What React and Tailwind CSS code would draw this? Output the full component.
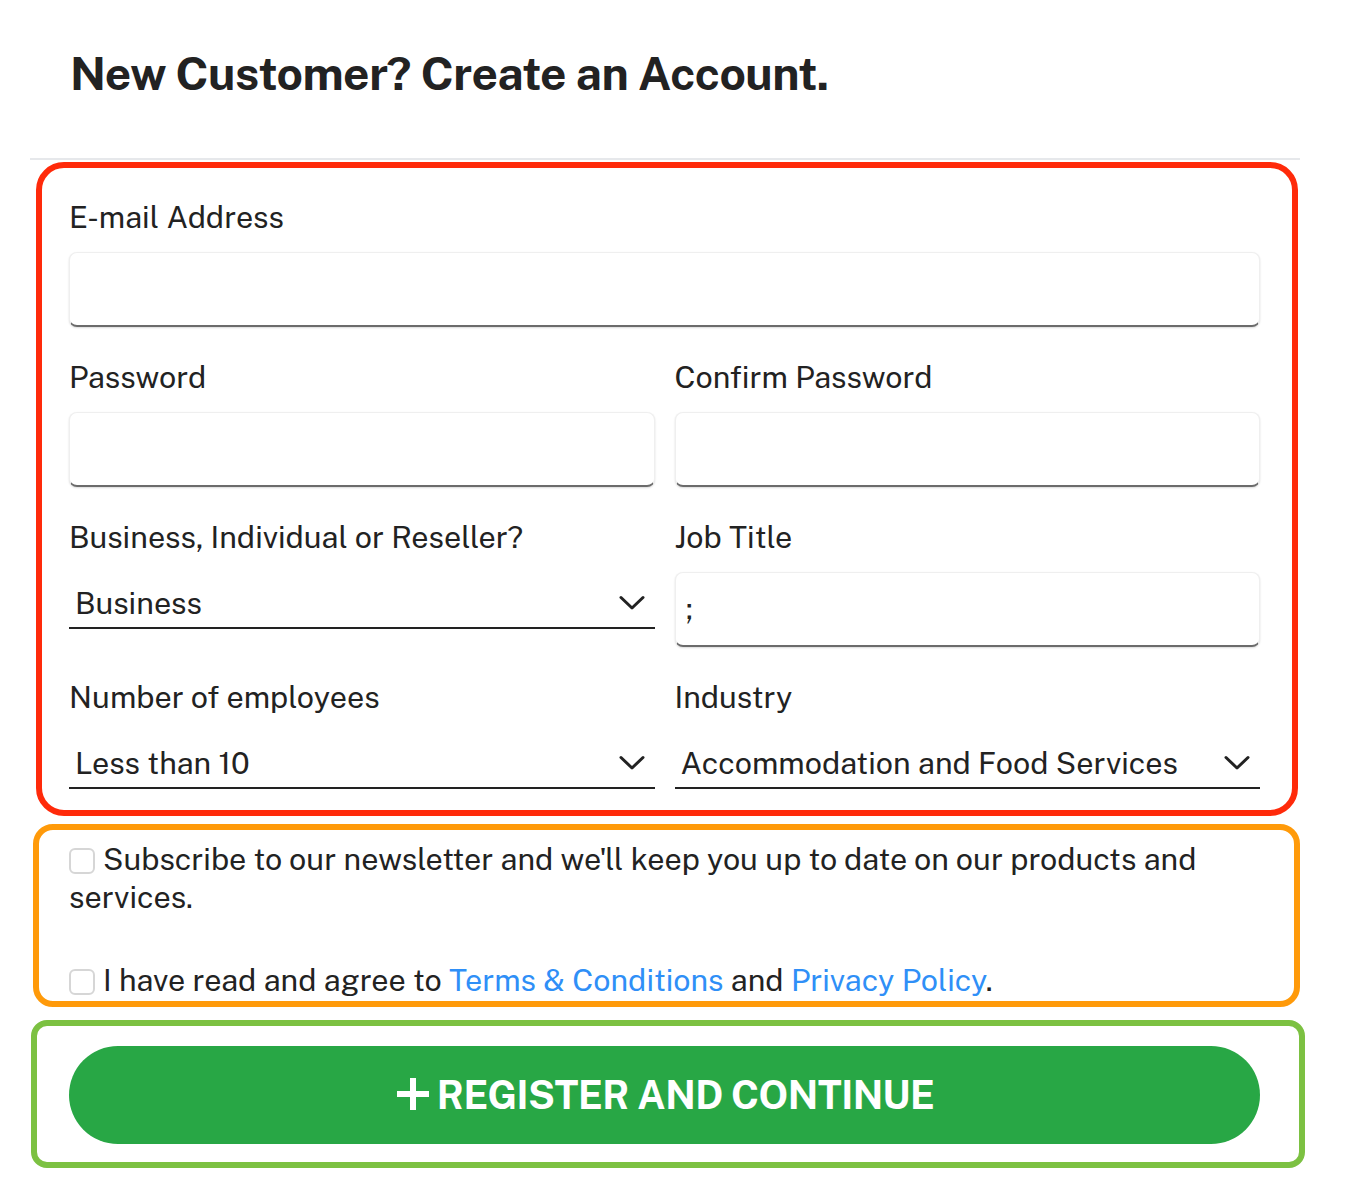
const font = { fontFamily: '"Public Sans", Inter, "Noto Sans", sans-serif' };

const Label = ({ children }) => (
    <label className="block h-[36px] text-[30.5px] leading-[36px] text-[#222]">{children}</label>
);

const TextInput = ({ value = "" }) => (
    <div className="mt-[17px] flex h-[75px] items-center rounded-lg border border-[#efefef] border-b-2 border-b-[#6b6b6b] bg-white px-[10px] text-[30.5px] text-[#222] shadow-[0_1px_2px_rgba(0,0,0,0.15)]">
        {value}
    </div>
);

const Chevron = () => (
    <svg width="26" height="16" viewBox="0 0 26 16" className="mt-[10px] shrink-0">
        <path d="M2 2.5 13 13 24 2.5" fill="none" stroke="#222" strokeWidth="3" strokeLinecap="round" strokeLinejoin="round" />
    </svg>
);

const Select = ({ value }) => (
    <div className="mt-[17px] flex h-[57px] items-start justify-between border-b-2 border-b-[#222] pl-[6px] pr-[10px] pt-[13px] text-[30.5px] leading-[36px] text-[#222]">
        <span>{value}</span>
        <Chevron />
    </div>
);

const Checkbox = () => (
    <span className="mr-[8px] inline-block h-[26px] w-[26px] translate-y-[4px] rounded-[6px] border-2 border-[#d6d6d6] bg-white align-baseline"></span>
);

export default function App() {
    return (
        <div className="min-h-[1200px] bg-white" style={font}>
            <div className="ml-[30px] w-[1270px]">
                {/* Heading */}
                <h1 className="pl-[40px] pt-[43px] text-[46px] font-bold leading-[60px] tracking-[-0.5px] text-[#222]">
                    New Customer? Create an Account.
                </h1>
                <div className="mt-[55px] h-[2px] bg-[#e6e8eb]" />

                {/* Account fields */}
                <div className="ml-[6px] mr-[2px] mt-[2px] rounded-[28px] border-[6px] border-[#ff2a0a] pb-[21px] pl-[27px] pr-[32px] pt-[31px]">
                    <Label>E-mail Address</Label>
                    <TextInput />

                    <div className="mt-[32px] grid grid-cols-2 gap-x-[20px]">
                        <div>
                            <Label>Password</Label>
                            <TextInput />
                        </div>
                        <div>
                            <Label>Confirm Password</Label>
                            <TextInput />
                        </div>
                    </div>

                    <div className="mt-[32px] grid grid-cols-2 gap-x-[20px]">
                        <div>
                            <Label>Business, Individual or Reseller?</Label>
                            <Select value="Business" />
                        </div>
                        <div>
                            <Label>Job Title</Label>
                            <TextInput value=";" />
                        </div>
                    </div>

                    <div className="mt-[32px] grid grid-cols-2 gap-x-[20px]">
                        <div>
                            <Label>Number of employees</Label>
                            <Select value="Less than 10" />
                        </div>
                        <div>
                            <Label>Industry</Label>
                            <Select value="Accommodation and Food Services" />
                        </div>
                    </div>
                </div>

                {/* Consent */}
                <div className="ml-[3px] mt-[8px] rounded-[20px] border-[6px] border-[#ff9a0a] pb-[2px] pl-[30px] pr-[30px] pt-[10px] text-[30.5px] leading-[38px] text-[#222]">
                    <p>
                        <Checkbox />
                        Subscribe to our newsletter and we'll keep you up to date on our products and services.
                    </p>
                    <p className="mt-[45px]">
                        <Checkbox />
                        I have read and agree to{" "}
                        <a className="text-[#2f8ff7]" href="#">Terms &amp; Conditions</a> and{" "}
                        <a className="text-[#2f8ff7]" href="#">Privacy Policy</a>.
                    </p>
                </div>

                {/* Submit */}
                <div className="ml-[1px] mr-[-5px] mt-[13px] rounded-[16px] border-[6px] border-[#7cc142] pb-[18px] pl-[32px] pr-[39px] pt-[20px]">
                    <button className="flex h-[98px] w-full items-center justify-center gap-[6px] rounded-full bg-[#28a745] text-[39px] font-bold tracking-[-0.5px] text-white">
                        <svg width="36" height="36" viewBox="0 0 36 36" className="mt-[-2px]">
                            <path d="M18 2v32M2 18h32" stroke="white" strokeWidth="6" />
                        </svg>
                        REGISTER AND CONTINUE
                    </button>
                </div>
            </div>
        </div>
    );
}
